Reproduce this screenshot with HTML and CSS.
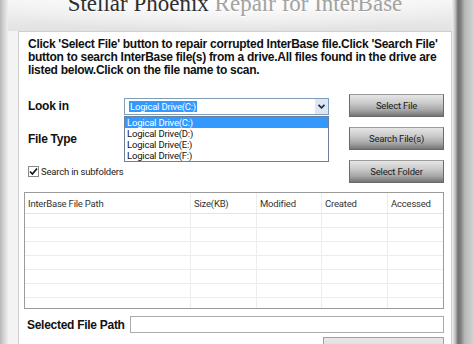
FILE: index.html
```html
<!DOCTYPE html>
<html lang="en">
<head>
  <meta charset="UTF-8">
  <title>Stellar Phoenix Repair for InterBase</title>
  <link rel="stylesheet" href="styles.css">
</head>
<body>
  <div class="screen">
    <div class="edge-left"></div>

    <div class="window">
      <!-- Title -->
      <div class="title-bar">
        <h1 class="title"><span class="title-dark">Stellar Phoenix</span> Repair for InterBase</h1>
      </div>

      <div class="panel">
        <p class="intro">Click 'Select File' button to repair corrupted InterBase file.Click 'Search File' button to search InterBase file(s) from a drive.All files found in the drive are listed below.Click on the file name to scan.</p>

        <!-- Drive / type pickers and action buttons -->
        <div class="controls">
          <div class="fields">
            <div class="field-row">
              <span class="field-label">Look in</span>
              <div class="combo">
                <span class="combo-value">Logical Drive(C:)</span>
                <span class="combo-arrow">
                  <svg width="7" height="5" viewBox="0 0 7 5"><path d="M0.5 0.8 L3.5 3.8 L6.5 0.8" fill="none" stroke="#1c2a3c" stroke-width="1.6"/></svg>
                </span>
                <ul class="combo-list">
                  <li class="selected">Logical Drive(C:)</li>
                  <li>Logical Drive(D:)</li>
                  <li>Logical Drive(E:)</li>
                  <li>Logical Drive(F:)</li>
                </ul>
              </div>
            </div>
            <div class="field-row">
              <span class="field-label">File Type</span>
            </div>
            <div class="field-row">
              <span class="checkbox">
                <svg width="9" height="9" viewBox="0 0 9 9"><path d="M1 4.5 L3.4 7 L8 1.5" fill="none" stroke="#111" stroke-width="1.6"/></svg>
              </span>
              <span class="check-label">Search in subfolders</span>
            </div>
          </div>

          <div class="actions">
            <button class="button">Select File</button>
            <button class="button">Search File(s)</button>
            <button class="button">Select Folder</button>
          </div>
        </div>

        <!-- Found files -->
        <div class="file-list">
          <div class="cell head">InterBase File Path</div>
          <div class="cell head">Size(KB)</div>
          <div class="cell head">Modified</div>
          <div class="cell head">Created</div>
          <div class="cell head last-col">Accessed</div>

          <div class="cell"></div><div class="cell"></div><div class="cell"></div><div class="cell"></div><div class="cell last-col"></div>
          <div class="cell"></div><div class="cell"></div><div class="cell"></div><div class="cell"></div><div class="cell last-col"></div>
          <div class="cell"></div><div class="cell"></div><div class="cell"></div><div class="cell"></div><div class="cell last-col"></div>
          <div class="cell"></div><div class="cell"></div><div class="cell"></div><div class="cell"></div><div class="cell last-col"></div>
          <div class="cell"></div><div class="cell"></div><div class="cell"></div><div class="cell"></div><div class="cell last-col"></div>
          <div class="cell"></div><div class="cell"></div><div class="cell"></div><div class="cell"></div><div class="cell last-col"></div>
          <div class="cell last-row"></div><div class="cell last-row"></div><div class="cell last-row"></div><div class="cell last-row"></div><div class="cell last-row last-col"></div>
        </div>

        <div class="path-row">
          <span class="path-label">Selected File Path</span>
          <input class="path-input" type="text">
        </div>

        <div class="scan-row">
          <button class="button button-wide">Start Scan</button>
        </div>
      </div>
    </div>

    <div class="edge-right"></div>
  </div>
</body>
</html>
```

FILE: styles.css
```css
/* General */
body {
  margin: 0;
  width: 474px;
  height: 344px;
  overflow: hidden;
  font-family: 'Liberation Sans', Arial, sans-serif;
  background: #e0e0e0;
}

.screen {
  display: flex;
  height: 344px;
}

/* Window frame */
.edge-left {
  width: 8px;
  background: linear-gradient(to right, #b8b8b8, #dcdcdc 5px, #eeeeee);
}

.edge-right {
  width: 22px;
  background: linear-gradient(to right, #f2f2f2 0, #c4c4c4 3px, #727272 6px, #7a7a7a 8px, #b9b9b9 13px, #d4d4d4 22px);
}

.window {
  width: 444px;
  display: flex;
  flex-direction: column;
  background: #f3f3f3;
}

/* Title */
.title-bar {
  flex-shrink: 0;
  height: 31px;
  overflow: hidden;
  background:
    radial-gradient(ellipse 60% 100% at 50% 0, #ffffff 0, rgba(255, 255, 255, 0) 100%),
    linear-gradient(#f4f4f4, #e2e2e2);
}

.title {
  margin: -8px 0 0;
  padding-left: 10px;
  font: normal 23px/23px 'Liberation Serif', serif;
  color: #a2a2a2;
  text-align: center;
  white-space: nowrap;
  text-shadow: 0 1px 0 #ffffff;
}

.title-dark {
  color: #2e2e2e;
}

/* Panel */
.panel {
  flex: 1 0 auto;
  margin-left: 10px;
  padding: 6px 7px 0 5px;
  background: #ffffff;
  border: 1px solid #cfcfcf;
  border-bottom: none;
}

.intro {
  margin: 0 0 0 4px;
  font-size: 12px;
  line-height: 13px;
  font-weight: bold;
  letter-spacing: -0.28px;
  color: #111111;
}

/* Controls */
.controls {
  display: flex;
  margin-top: 17px;
}

.fields {
  flex: 1;
  display: flex;
  flex-direction: column;
  gap: 10px;
  margin-left: 4px;
}

.field-row {
  height: 23px;
  display: flex;
  align-items: center;
}

.field-label {
  width: 96px;
  font-size: 12px;
  font-weight: bold;
  letter-spacing: -0.28px;
  color: #111111;
}

.combo {
  position: relative;
  width: 205px;
  height: 17px;
  margin-top: 2px;
  box-sizing: border-box;
  border: 1px solid #7f9db9;
  display: flex;
  align-items: center;
  font-family: Roboto, sans-serif;
  font-size: 9.5px;
  letter-spacing: -0.2px;
}

.combo-value {
  margin-left: 4px;
  padding: 0 1px;
  line-height: 11px;
  background: #3399ff;
  color: #ffffff;
}

.combo-arrow {
  margin-left: auto;
  width: 13px;
  height: 15px;
  display: flex;
  align-items: center;
  justify-content: center;
  background: #dce6f4;
}

.combo-list {
  position: absolute;
  top: 17px;
  left: -1px;
  width: 205px;
  margin: 0;
  padding: 0;
  list-style: none;
  box-sizing: border-box;
  border: 1px solid #6c7f98;
  background: #ffffff;
  z-index: 2;
}

.combo-list li {
  height: 11px;
  line-height: 11px;
  padding-left: 2px;
  color: #111111;
}

.combo-list li.selected {
  background: #3399ff;
  color: #ffffff;
}

.checkbox {
  width: 11px;
  height: 11px;
  box-sizing: border-box;
  border: 1px solid #8a8a8a;
  background: #ffffff;
  display: flex;
  align-items: center;
  justify-content: center;
}

.check-label {
  margin-left: 2px;
  font-family: Roboto, sans-serif;
  font-size: 9.5px;
  letter-spacing: -0.2px;
  color: #222222;
}

/* Buttons */
.actions {
  width: 95px;
  display: flex;
  flex-direction: column;
  gap: 10px;
}

.button {
  height: 23px;
  padding: 0;
  border: 1px solid #6a6a6a;
  border-top-color: #9c9c9c;
  background: linear-gradient(to bottom, #e6e6e6 0%, #cdcdcd 35%, #a9a9a9 70%, #747474 100%);
  font-family: Roboto, sans-serif;
  font-size: 9.5px;
  letter-spacing: -0.2px;
  color: #1a1a1a;
  cursor: pointer;
}

.button-wide {
  width: 121px;
  height: 30px;
  border-color: #a0a0a0;
  background: linear-gradient(to bottom, #e8e8e8, #c9c9c9);
}

/* File list */
.file-list {
  width: 420px;
  height: 117px;
  margin-top: 9px;
  box-sizing: border-box;
  border: 1px solid #9b9b9b;
  display: grid;
  grid-template-columns: 166px 66px 65px 66px 1fr;
  grid-template-rows: 21px repeat(6, 14px) 1fr;
}

.cell {
  box-sizing: border-box;
  border-right: 1px solid #ececec;
  border-bottom: 1px solid #ececec;
}

.cell.last-col {
  border-right: none;
}

.cell.last-row {
  border-bottom: none;
}

.cell.head {
  padding: 5px 0 0 3px;
  font-family: Roboto, sans-serif;
  font-size: 9.5px;
  letter-spacing: -0.2px;
  color: #333333;
  border-bottom-color: #e4e4e4;
}

/* Selected file path */
.path-row {
  height: 17px;
  margin: 7px 0 0 3px;
  display: flex;
  align-items: center;
}

.path-label {
  width: 103px;
  font-size: 12px;
  font-weight: bold;
  letter-spacing: -0.28px;
  color: #111111;
}

.path-input {
  flex: 1;
  height: 17px;
  margin: 0;
  padding: 0;
  box-sizing: border-box;
  border: 1px solid #ababab;
  outline: none;
}

.scan-row {
  display: flex;
  justify-content: flex-end;
  margin-top: 4px;
}
```
